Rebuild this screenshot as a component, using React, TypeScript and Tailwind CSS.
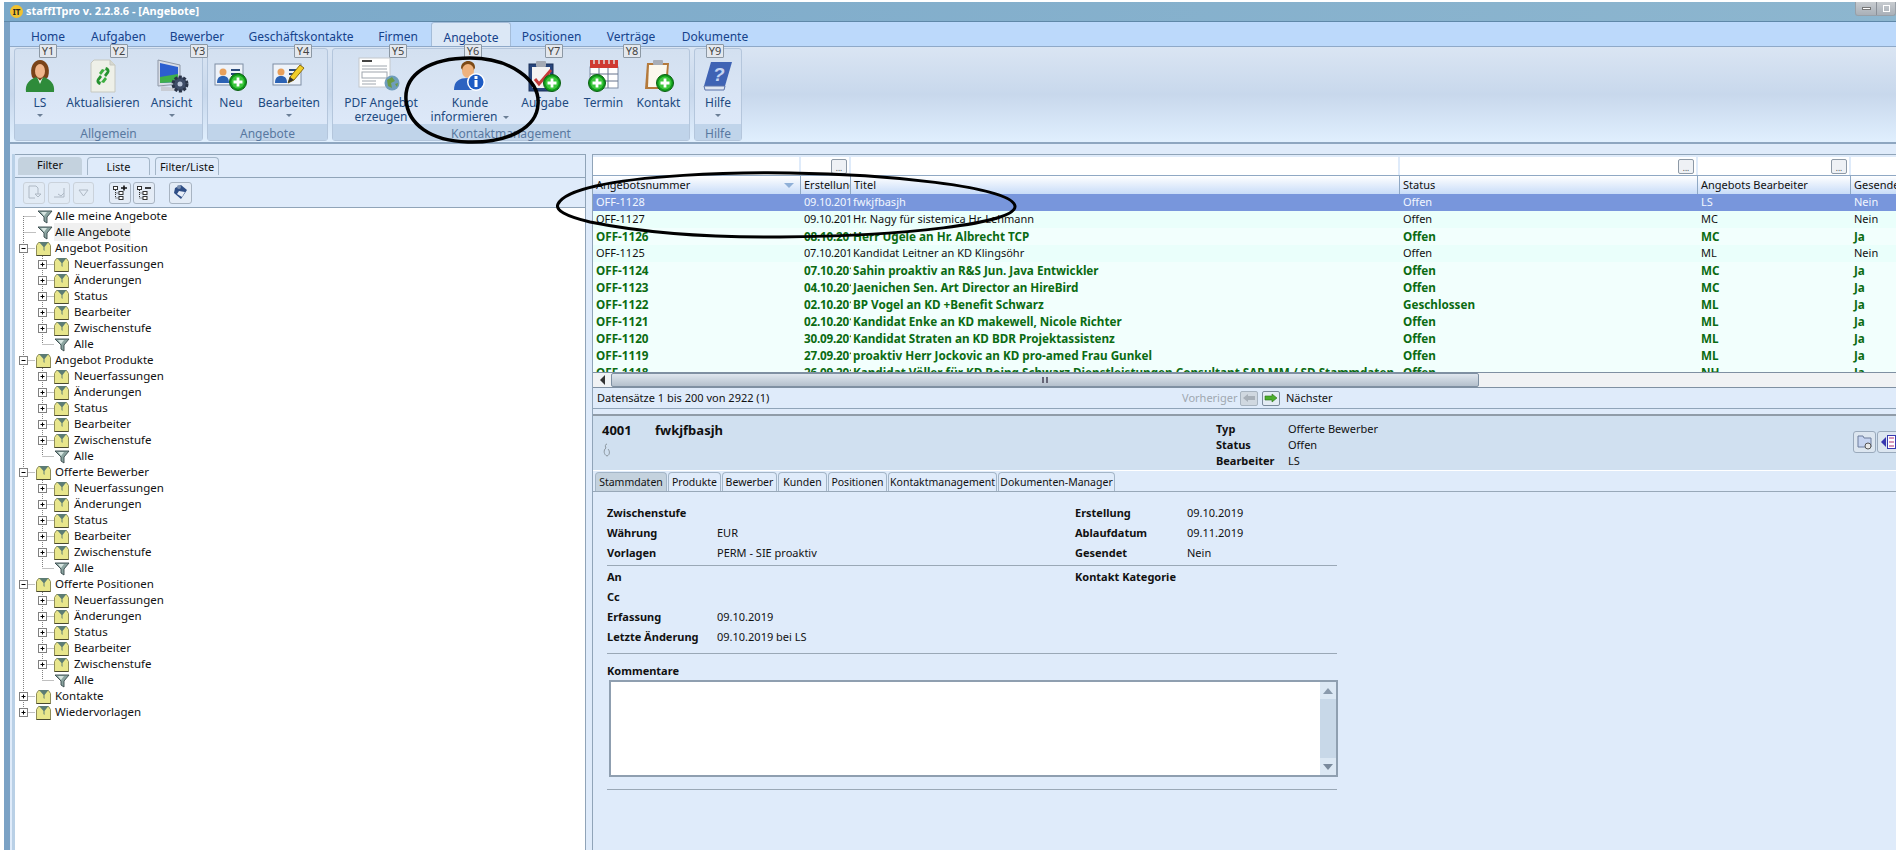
import React from 'react';

const colW = ['w-[208px]', 'w-[50px]', 'w-[549px]', 'w-[298px]', 'w-[153px]', 'w-[60px]'];

const rows = [
  ['OFF-1128', '09.10.2019', 'fwkjfbasjh', 'Offen', 'LS', 'Nein', 'sel'],
  ['OFF-1127', '09.10.2019', 'Hr. Nagy für sistemica Hr. Lehmann', 'Offen', 'MC', 'Nein', ''],
  ['OFF-1126', '08.10.2019', 'Herr Ugele an Hr. Albrecht TCP', 'Offen', 'MC', 'Ja', 'sent'],
  ['OFF-1125', '07.10.2019', 'Kandidat Leitner an KD Klingsöhr', 'Offen', 'ML', 'Nein', ''],
  ['OFF-1124', '07.10.2019', 'Sahin proaktiv an R&S Jun. Java Entwickler', 'Offen', 'MC', 'Ja', 'sent'],
  ['OFF-1123', '04.10.2019', 'Jaenichen Sen. Art Director an HireBird', 'Offen', 'MC', 'Ja', 'sent'],
  ['OFF-1122', '02.10.2019', 'BP Vogel an KD +Benefit Schwarz', 'Geschlossen', 'ML', 'Ja', 'sent'],
  ['OFF-1121', '02.10.2019', 'Kandidat Enke an KD makewell, Nicole Richter', 'Offen', 'ML', 'Ja', 'sent'],
  ['OFF-1120', '30.09.2019', 'Kandidat Straten an KD BDR Projektassistenz', 'Offen', 'ML', 'Ja', 'sent'],
  ['OFF-1119', '27.09.2019', 'proaktiv Herr Jockovic an KD pro-amed Frau Gunkel', 'Offen', 'ML', 'Ja', 'sent'],
  ['OFF-1118', '26.09.2019', 'Kandidat Völler für KD Boing Schwarz Dienstleistungen Consultant SAP MM / SD Stammdaten', 'Offen', 'NH', 'Ja', 'sent'],
];

const tabs = [
  ['Home', 'w-[64px]'],
  ['Aufgaben', 'w-[77px]'],
  ['Bewerber', 'w-[80px]'],
  ['Geschäftskontakte', 'w-[128px]'],
  ['Firmen', 'w-[66px]'],
  ['Angebote', 'w-[80px]'],
  ['Positionen', 'w-[81px]'],
  ['Verträge', 'w-[78px]'],
  ['Dokumente', 'w-[90px]'],
];

const keytips = [
  ['Y1', 'left-[39px]'],
  ['Y2', 'left-[110px]'],
  ['Y3', 'left-[190px]'],
  ['Y4', 'left-[294px]'],
  ['Y5', 'left-[389px]'],
  ['Y6', 'left-[464px]'],
  ['Y7', 'left-[545px]'],
  ['Y8', 'left-[623px]'],
  ['Y9', 'left-[706px]'],
];

const PlusBadge = ({ x, y }: { x: number; y: number }) => (
  <g>
    <circle cx={x} cy={y} r="8.5" fill="#0f9a1a" stroke="#0b5f12" strokeWidth="1" />
    <circle cx={x} cy={y} r="6.5" fill="#3cc63c" />
    <path d={`M${x - 4.5} ${y}h9M${x} ${y - 4.5}v9`} stroke="#fff" strokeWidth="2.8" />
  </g>
);

const IconLS = () => (
  <svg width="32" height="34" viewBox="0 0 32 34">
    <path d="M8 18C5 8 10 1 16 1s11 7 8 17l-3 3H11z" fill="#7a4318" />
    <ellipse cx="16" cy="12" rx="5" ry="7" fill="#f0b58a" />
    <path d="M2 33c-1-8 3-12 10-15l4 4 4-4c7 3 11 7 10 15z" fill="#2e8b3a" />
    <path d="M13 18l3 7 3-7-3 4z" fill="#e8f5e8" />
  </svg>
);

const IconRefresh = () => (
  <svg width="32" height="34" viewBox="0 0 32 34">
    <path d="M7 1h16l5 5v27H4V4z" fill="#eef0e8" stroke="#c6c8c0" />
    <path d="M23 1v5h5" fill="#d6d8d0" stroke="#c6c8c0" />
    <path d="M19 8a4 4 0 0 1 3 6l-3 4-2-2 3-4-2-1zM13 26a4 4 0 0 1-3-6l3-4 2 2-3 4 2 1z" fill="#25922f" />
    <path d="M12 14l3-4 3 1-4 5zM20 20l-3 4-3-1 4-5z" fill="#3cae3f" />
  </svg>
);

const IconView = () => (
  <svg width="34" height="34" viewBox="0 0 34 34">
    <path d="M3 1l22 5v19L3 27z" fill="#d8dde6" stroke="#8e97a6" />
    <path d="M5 4l18 4v15L5 24z" fill="#2c5fd0" />
    <path d="M5 18l18-3v8L5 24z" fill="#3fb04a" />
    <path d="M6 27l15 2v3H6z" fill="#c8ccd4" />
    <circle cx="25" cy="25" r="7" fill="#3f4d68" stroke="#2a3448" strokeWidth="3" strokeDasharray="3 1.5" />
    <circle cx="25" cy="25" r="2.5" fill="#b8c4d8" />
  </svg>
);

const IconCardNew = ({ pencil }: { pencil?: boolean }) => (
  <svg width="34" height="30" viewBox="0 0 34 30">
    <rect x="1" y="3" width="28" height="21" fill="#eef3fa" stroke="#7e8ea4" />
    <circle cx="9" cy="11" r="3.5" fill="#e8a05c" />
    <path d="M3 22c0-6 3-7 6-7s6 1 6 7z" fill="#2b62b4" />
    <path d="M17 9h9M17 13h9" stroke="#2c4c7c" strokeWidth="2" />
    {pencil ? (
      <g>
        <path d="M16 22l2-6L28 4l4 3-10 12z" fill="#f2cf2a" stroke="#8d6d10" />
        <path d="M16 22l2-6 4 3z" fill="#333" />
      </g>
    ) : (
      <PlusBadge x={24} y={21} />
    )}
  </svg>
);

const IconPdf = () => (
  <svg width="46" height="38" viewBox="0 0 46 38">
    <rect x="1" y="1" width="31" height="29" fill="#fff" stroke="#c4c8cc" />
    <path d="M4 4h10" stroke="#444" strokeWidth="2" />
    <path d="M4 9h25M4 12h25" stroke="#9fa6ae" />
    <rect x="4" y="15" width="25" height="6" fill="none" stroke="#9fa6ae" />
    <path d="M4 24h14M4 27h14" stroke="#9fa6ae" />
    <circle cx="34" cy="26" r="7.5" fill="#6e9dbb" />
    <path d="M29 23l5-3 3 4-4 2 1 5-4-2zM37 27l3-1-1 4z" fill="#6b9b44" />
  </svg>
);

const IconInform = () => (
  <svg width="34" height="32" viewBox="0 0 34 32">
    <path d="M8 8c0-5 4-7 7-7 4 0 7 2 7 7l-2 3H10z" fill="#7c4a17" />
    <ellipse cx="15" cy="11" rx="6" ry="7" fill="#eeb27e" />
    <path d="M1 30c0-9 5-12 14-12s12 3 12 12z" fill="#2c62c0" />
    <circle cx="23" cy="22" r="9" fill="#fff" />
    <circle cx="23" cy="22" r="7.5" fill="#1d5bc4" />
    <rect x="21.5" y="20" width="3" height="7" fill="#fff" />
    <rect x="21.5" y="16" width="3" height="3" fill="#fff" />
  </svg>
);

const IconTask = () => (
  <svg width="34" height="34" viewBox="0 0 34 34">
    <rect x="1" y="5" width="24" height="27" fill="#27457c" stroke="#1b3159" />
    <rect x="4" y="8" width="18" height="21" fill="#f3f3f3" />
    <rect x="8" y="2" width="10" height="6" rx="1" fill="#a4aab4" />
    <path d="M7 20l4 5 12-14" fill="none" stroke="#c63a3a" strokeWidth="3" />
    <PlusBadge x={24} y={24} />
  </svg>
);

const IconCalendar = () => (
  <svg width="34" height="34" viewBox="0 0 34 34">
    <rect x="3" y="8" width="28" height="21" fill="#fff" stroke="#7f8ea6" />
    <path d="M3 1h28v8H3z" fill="#cf3a32" />
    <path d="M7 1v4M12 1v4M17 1v4M22 1v4M27 1v4" stroke="#ddd" strokeWidth="1.5" />
    <path d="M3 15h28M3 22h28M12 9v20M21 9v20" stroke="#65728c" />
    <PlusBadge x={10} y={24} />
  </svg>
);

const IconContact = () => (
  <svg width="34" height="34" viewBox="0 0 34 34">
    <path d="M5 4h22l-2 26H3z" fill="#b47a3c" />
    <path d="M7 6h18l-2 22H6z" fill="#fbf8ee" />
    <rect x="11" y="1" width="10" height="5" rx="1" fill="#a8aeb8" />
    <PlusBadge x={23} y={24} />
  </svg>
);

const IconHelp = () => (
  <svg width="32" height="32" viewBox="0 0 32 32">
    <path d="M9 2h21l-7 24H2z" fill="#3f63b4" />
    <path d="M2 26h21l-1 4H3z" fill="#dfe6f2" stroke="#5a72a8" />
    <text x="11" y="21" fontSize="19" fontWeight="700" fill="#c4d4f2" fontFamily="Liberation Sans, sans-serif" fontStyle="italic">?</text>
  </svg>
);

const RibbonButton = ({ w, icon, lines, arrow }: { w: string; icon: React.ReactNode; lines: string[]; arrow?: boolean }) => (
  <div className={`${w} flex flex-col items-center pt-[9px]`}>
    <div className="h-[36px] flex items-center justify-center">{icon}</div>
    <div className="mt-[2px] leading-[14px] text-center text-[#214a80] whitespace-nowrap">
      {lines.map((l, i) => (
        <div key={l}>
          {l}
          {arrow && i === 1 && <span className="inline-block ml-[6px] align-middle w-0 h-0 border-x-[3px] border-t-[3px] border-x-transparent border-t-[#6b7f96]" />}
        </div>
      ))}
      {arrow && lines.length === 1 && <div className="mx-auto mt-[4px] w-0 h-0 border-x-[3px] border-t-[3px] border-x-transparent border-t-[#6b7f96]" />}
    </div>
  </div>
);

const RibbonGroup = ({ w, label, children }: { w: string; label: string; children: React.ReactNode }) => (
  <div className={`${w} h-[93px] mt-[1px] flex flex-col rounded-[3px] border border-[#b4c6dc] bg-gradient-to-b from-[#d3e0f0] to-[#dfeafa]`}>
    <div className="h-[75px] shrink-0 flex">{children}</div>
    <div className="h-[16px] shrink-0 bg-[#c0d4ea] text-center text-[#5878a0] leading-[19px]">{label}</div>
  </div>
);

type TreeKind = 'leaf' | 'folder';

const FolderGlyph = ({ x }: { x: number }) => (
  <g transform={`translate(${x} 0)`}>
    <path d="M0.5 5.5l2-3h10l2 3v10h-14z" fill="#e8e68c" stroke="#8f8d58" />
    <path d="M0.5 15.5h14" stroke="#4a4a30" />
    <path d="M3 2l4.5 5v3l1 1V7l4-5z" fill="#5c7c74" />
  </g>
);

const FunnelGlyph = ({ x }: { x: number }) => (
  <g transform={`translate(${x} 0)`}>
    <path d="M0 3h14l-5 6v6l-3-2V9z" fill="#8ba4a0" stroke="#36474a" strokeWidth="0.9" />
    <path d="M3 4h6l-3 4z" fill="#d8e6e2" />
  </g>
);

// prefix of one tree row: dotted guides, expander box and icon
const TreeRoot = ({ kind, box, label, last, first, selected }: { kind: TreeKind; box?: '+' | '-'; label: string; last?: boolean; first?: boolean; selected?: boolean }) => (
  <div className="h-4 flex items-center">
    <svg width="37" height="16" className="shrink-0 ml-[2px]">
      <path d={`M6.5 ${first ? 8 : 0}V${last ? 8 : 16}M6.5 8.5H${kind === 'leaf' ? 19 : 18}`} stroke="#808080" strokeDasharray="1 1" />
      {box && (
        <g>
          <rect x="2.5" y="4.5" width="8" height="8" fill="#fff" stroke="#808080" />
          <path d={box === '+' ? 'M4.5 8.5h4M6.5 6.5v4' : 'M4.5 8.5h4'} stroke="#000" />
        </g>
      )}
      {kind === 'leaf' ? <FunnelGlyph x={21} /> : <FolderGlyph x={19} />}
    </svg>
    <span className={`px-[1px] ${selected ? 'bg-[#f0f0f0]' : ''}`}>{label}</span>
  </div>
);

const TreeChild = ({ kind, label, last }: { kind: TreeKind; label: string; last?: boolean }) => (
  <div className="h-4 flex items-center">
    <svg width="57" height="16" className="shrink-0 ml-[2px]">
      <path d="M6.5 0V16" stroke="#808080" strokeDasharray="1 1" />
      <path d={`M25.5 0V${last ? 8 : 16}M25.5 8.5H37`} stroke="#808080" strokeDasharray="1 1" />
      {kind === 'folder' && (
        <g>
          <rect x="21.5" y="4.5" width="8" height="8" fill="#fff" stroke="#808080" />
          <path d="M23.5 8.5h4M25.5 6.5v4" stroke="#000" />
        </g>
      )}
      {kind === 'leaf' ? <FunnelGlyph x={38} /> : <FolderGlyph x={37} />}
    </svg>
    <span>{label}</span>
  </div>
);

const TreeGroup = ({ label }: { label: string }) => (
  <>
    <TreeRoot kind="folder" box="-" label={label} />
    {['Neuerfassungen', 'Änderungen', 'Status', 'Bearbeiter', 'Zwischenstufe'].map((c) => (
      <TreeChild key={c} kind="folder" label={c} />
    ))}
    <TreeChild kind="leaf" label="Alle" last />
  </>
);

const ToolButton = ({ w, children, off }: { w: string; children: React.ReactNode; off?: boolean }) => (
  <div className={`${w} h-[22px] flex items-center justify-center rounded-[3px] border ${off ? 'border-[#c2c8ce] bg-[#e4ebf3] opacity-70' : 'border-[#a8b4c2] bg-[#e4ecf6]'}`}>
    {children}
  </div>
);

const TreeToggleIcon = ({ plus }: { plus?: boolean }) => (
  <svg width="16" height="16" viewBox="0 0 16 16">
    <path d="M3.5 3v10h3M3.5 8h3" fill="none" stroke="#333" strokeDasharray="1 1" />
    <rect x="1.5" y="1.5" width="4" height="3" fill="#fff" stroke="#333" />
    <rect x="7" y="6.5" width="4" height="3" fill="#fff" stroke="#333" />
    <rect x="7" y="11.5" width="4" height="3" fill="#fff" stroke="#333" />
    <path d={plus ? 'M9 3h6M12 0.5v5' : 'M9 3h6'} stroke="#111" strokeWidth="1.6" />
  </svg>
);

const DotsButton = () => (
  <span className="absolute right-[2px] top-[2px] h-[15px] w-[16px] flex items-end justify-center rounded-[2px] border border-[#8d99a6] bg-[#eef1f5] text-[8px] leading-[10px] text-[#444]">...</span>
);

const Field = ({ label, value, valueW = 'w-[110px]' }: { label: string; value?: string; valueW?: string }) => (
  <div className="h-5 flex items-center">
    <span className={`${valueW} shrink-0 font-bold`}>{label}</span>
    <span>{value}</span>
  </div>
);

const TableRow = ({ r }: { r: string[] }) => {
  const tone =
    r[6] === 'sel'
      ? 'bg-[#7896dc] text-[#f2f6ff]'
      : r[6] === 'sent'
        ? 'bg-[#f2fffd] text-[#0b6b12] font-bold text-[11.7px]'
        : 'bg-[#eafffb] text-[#111]';
  return (
    <div className={`h-[17px] flex items-center ${tone}`}>
      {r.slice(0, 6).map((c, i) => (
        <div key={i} className={`${colW[i]} shrink-0 overflow-hidden whitespace-nowrap ${i === 2 ? 'pl-[2px]' : 'pl-[3px]'} ${i === 1 ? 'tracking-[-0.2px]' : ''}`}>
          {c}
        </div>
      ))}
    </div>
  );
};

export default function App() {
  return (
    <div className="relative w-[1896px] h-[850px] overflow-hidden bg-white text-[11px] text-[#111] font-['Noto_Sans',sans-serif] flex flex-col">
      <div className="h-[2px] shrink-0 bg-white" />
      <div className="h-[20px] shrink-0 ml-1 flex items-center bg-gradient-to-r from-[#7aa8c9] to-[#8db6cf] border-b border-[#5f88a8]">
        <span className="ml-[6px] w-[13px] h-[13px] rounded-full bg-[#f2c230] text-[8px] leading-[13px] font-bold text-center text-[#222]">IT</span>
        <span className="ml-[3px] text-[11px] font-bold text-white">staffITpro v. 2.2.8.6 - [Angebote]</span>
        <div className="ml-auto mb-[6px] h-[14px] flex rounded-b-[3px] border border-t-0 border-[#98a0a8] bg-gradient-to-b from-[#c8ccd0] to-[#a9b0b8]">
          <div className="w-[21px] flex items-center justify-center border-r border-[#8a9098]">
            <span className="w-[9px] h-[3px] bg-white border border-[#777]" />
          </div>
          <div className="w-[18px] flex items-center justify-center">
            <span className="w-[7px] h-[7px] border border-white" />
          </div>
        </div>
      </div>

      <div className="flex-1 min-h-0 flex">
        <div className="w-1 shrink-0 bg-white" />
        <div className="w-[6px] shrink-0 bg-[#7ba2c5]" />
        <div className="flex-1 min-w-0 flex flex-col">
          {/* tab strip */}
          <div className="h-[25px] shrink-0 pl-[6px] flex items-end bg-[#bcd9fb] border-b border-[#8fa9c8] text-[12px] text-[#15428b]">
            {tabs.map(([t, w]) => (
              <div
                key={t}
                className={`${w} h-[24px] shrink-0 text-center leading-[29px] ${t === 'Angebote' ? 'rounded-t-[3px] border border-b-0 border-[#a4bcd8] bg-[#dce8f6]' : ''}`}
              >
                {t}
              </div>
            ))}
          </div>

          {/* ribbon */}
          <div className="h-[97px] shrink-0 pl-[4px] flex gap-1 border-b-2 border-[#8ea6c0] bg-gradient-to-b from-[#dae5f3] via-[#c8d8ec] to-[#e0effe] text-[12px]">
            <RibbonGroup w="w-[189px]" label="Allgemein">
              <RibbonButton w="w-[50px]" icon={<IconLS />} lines={['LS']} arrow />
              <RibbonButton w="w-[76px]" icon={<IconRefresh />} lines={['Aktualisieren']} />
              <RibbonButton w="w-[61px]" icon={<IconView />} lines={['Ansicht']} arrow />
            </RibbonGroup>
            <RibbonGroup w="w-[121px]" label="Angebote">
              <RibbonButton w="w-[46px]" icon={<IconCardNew />} lines={['Neu']} />
              <RibbonButton w="w-[70px]" icon={<IconCardNew pencil />} lines={['Bearbeiten']} arrow />
            </RibbonGroup>
            <RibbonGroup w="w-[358px]" label="Kontaktmanagement">
              <RibbonButton w="w-[96px]" icon={<IconPdf />} lines={['PDF Angebot', 'erzeugen']} />
              <RibbonButton w="w-[82px]" icon={<IconInform />} lines={['Kunde', 'informieren']} arrow />
              <RibbonButton w="w-[68px]" icon={<IconTask />} lines={['Aufgabe']} />
              <RibbonButton w="w-[49px]" icon={<IconCalendar />} lines={['Termin']} />
              <RibbonButton w="w-[61px]" icon={<IconContact />} lines={['Kontakt']} />
            </RibbonGroup>
            <RibbonGroup w="w-[48px]" label="Hilfe">
              <RibbonButton w="w-[46px]" icon={<IconHelp />} lines={['Hilfe']} arrow />
            </RibbonGroup>
          </div>

          {/* main area */}
          <div className="flex-1 min-h-0 pt-[10px] pl-[2px] flex bg-[#dfebfa]">
            <div className="w-[3px] shrink-0 bg-[#b9d0e6]" />
            {/* left panel */}
            <div className="w-[571px] shrink-0 flex flex-col border-t border-r border-[#90a4b8]">
              <div className="h-[23px] shrink-0 pl-[3px] flex items-end gap-[5px] border-b border-[#90a4b8] text-[11px]">
                <div className="w-[64px] h-[18px] mb-[2px] rounded-t-[4px] bg-[#c4d2de] text-center leading-[16px]">Filter</div>
                <div className="w-[63px] h-[18px] mb-[2px] rounded-t-[4px] border border-b-0 border-[#a4b6c8] text-center leading-[18px]">Liste</div>
                <div className="w-[64px] h-[18px] mb-[2px] rounded-t-[4px] border border-b-0 border-[#a4b6c8] text-center leading-[18px]">Filter/Liste</div>
              </div>
              <div className="h-[30px] shrink-0 pl-[8px] flex items-center border-b border-[#90a4b8]">
                <ToolButton w="w-[22px]" off>
                  <svg width="15" height="15" viewBox="0 0 15 15"><path d="M2 1h7l2 2v6M2 1v12h6M8 9l3 3 3-3z" fill="none" stroke="#9aa4ae" /></svg>
                </ToolButton>
                <div className="w-[3px]" />
                <ToolButton w="w-[22px]" off>
                  <svg width="15" height="15" viewBox="0 0 15 15"><path d="M2 12h10V3M6 9l3 2 3-3" fill="none" stroke="#9aa4ae" /></svg>
                </ToolButton>
                <div className="w-[3px]" />
                <ToolButton w="w-[21px]" off>
                  <svg width="13" height="13" viewBox="0 0 13 13"><path d="M2 4h9L6.5 10z" fill="none" stroke="#9aa4ae" /></svg>
                </ToolButton>
                <div className="w-[15px]" />
                <ToolButton w="w-[22px]"><TreeToggleIcon plus /></ToolButton>
                <div className="w-[2px]" />
                <ToolButton w="w-[22px]"><TreeToggleIcon /></ToolButton>
                <div className="w-[14px]" />
                <ToolButton w="w-[23px]">
                  <svg width="17" height="17" viewBox="0 0 17 17">
                    <path d="M3 4l6-3 6 5-6 9-7-6z" fill="#2f4e86" />
                    <path d="M7 7l6 1-3 5-5-3z" fill="#e8eef8" />
                    <circle cx="7" cy="3" r="2" fill="#7a8fb0" />
                  </svg>
                </ToolButton>
              </div>
              <div className="flex-1 min-h-0 bg-white text-[11.5px]">
                <TreeRoot kind="leaf" label="Alle meine Angebote" first />
                <TreeRoot kind="leaf" label="Alle Angebote" selected />
                <TreeGroup label="Angebot Position" />
                <TreeGroup label="Angebot Produkte" />
                <TreeGroup label="Offerte Bewerber" />
                <TreeGroup label="Offerte Positionen" />
                <TreeRoot kind="folder" box="+" label="Kontakte" />
                <TreeRoot kind="folder" box="+" label="Wiedervorlagen" last />
              </div>
            </div>

            {/* right panel */}
            <div className="ml-[6px] flex-1 min-w-0 flex flex-col overflow-hidden border-l border-t border-[#90a4b8] bg-[#dfebfa]">
              <div className="h-[20px] shrink-0 pt-[2px] flex">
                {colW.map((w, i) => (
                  <div key={w} className={`${w} shrink-0 pr-[2px]`}>
                    <div className="relative h-[18px] bg-white">{(i === 1 || i === 3 || i === 4) && <DotsButton />}</div>
                  </div>
                ))}
              </div>
              <div className="h-[19px] shrink-0 flex border-t border-[#8fa8c4] bg-gradient-to-b from-[#ffffff] to-[#c8dcf8]">
                {['Angebotsnummer', 'Erstellung', 'Titel', 'Status', 'Angebots Bearbeiter', 'Gesendet'].map((h, i) => (
                  <div key={h} className={`${colW[i]} shrink-0 overflow-hidden whitespace-nowrap pl-[3px] leading-[18px] border-r border-[#8fa8c4] relative`}>
                    {h}
                    {i === 0 && <span className="absolute right-[6px] top-[7px] w-0 h-0 border-x-[5px] border-t-[5px] border-x-transparent border-t-[#8fb0d8]" />}
                  </div>
                ))}
              </div>
              <div className="h-[178px] shrink-0 overflow-hidden bg-[#f0fffd]">
                {rows.map((r) => (
                  <TableRow key={r[0]} r={r} />
                ))}
              </div>
              <div className="h-[16px] shrink-0 flex items-center border-y border-[#7f90a2] bg-[#f0f2f4]">
                <div className="w-[18px] flex justify-center">
                  <span className="w-0 h-0 border-y-[5px] border-r-[5px] border-y-transparent border-r-[#333]" />
                </div>
                <div className="w-[868px] h-[14px] flex items-center justify-center rounded-[2px] border border-[#7f90a2] bg-gradient-to-b from-[#dfe6ee] to-[#b4c0cc]">
                  <span className="w-[6px] h-[6px] border-x-2 border-[#667]" />
                </div>
              </div>
              <div className="h-[21px] shrink-0 pl-[4px] flex items-center border-b border-[#90a4b8] bg-[#dfebfa]">
                <span className="w-[585px] shrink-0">Datensätze 1 bis 200 von 2922 (1)</span>
                <span className="w-[58px] shrink-0 text-[#a0a8b0]">Vorheriger</span>
                <span className="w-[18px] h-[15px] flex items-center justify-center rounded-[2px] border border-[#a8b4c0] bg-[#d0d8e0]">
                  <svg width="14" height="10" viewBox="0 0 14 10"><path d="M1 5l5-4v2h7v4H6v2z" fill="#a8b0b8" /></svg>
                </span>
                <span className="ml-[4px] w-[18px] h-[15px] flex items-center justify-center rounded-[2px] border border-[#7c8c9c] bg-[#e4ecf4]">
                  <svg width="14" height="10" viewBox="0 0 14 10"><path d="M13 5L8 1v2H1v4h7v2z" fill="#4cae2c" stroke="#2a6e14" strokeWidth="0.6" /></svg>
                </span>
                <span className="ml-[6px]">Nächster</span>
              </div>

              <div className="h-[5px] shrink-0 bg-[#dfebfa]" />
              {/* detail header */}
              <div className="h-[57px] shrink-0 pl-[9px] flex bg-[#d0e0f0] border-t-2 border-[#909ca8] border-b border-b-white relative">
                <div className="pt-[5px] font-bold text-[13px] leading-[18px]">
                  <div className="flex">
                    <span className="w-[53px]">4001</span>
                    <span>fwkjfbasjh</span>
                  </div>
                  <svg width="10" height="16" viewBox="0 0 10 16" className="mt-[3px]">
                    <path d="M5 2C3 2 3 5 4 6c-3 2-2 7 1 8 3-1 3-5 1-7" fill="none" stroke="#8a959e" />
                  </svg>
                </div>
                <div className="ml-[493px] pt-[5px] leading-[16px]">
                  <div className="flex"><span className="w-[72px] font-bold">Typ</span>Offerte Bewerber</div>
                  <div className="flex"><span className="w-[72px] font-bold">Status</span>Offen</div>
                  <div className="flex"><span className="w-[72px] font-bold">Bearbeiter</span>LS</div>
                </div>
                <div className="absolute left-[1260px] top-[15px] flex gap-[1px]">
                  <div className="w-[23px] h-[22px] flex items-center justify-center rounded-[3px] border border-[#9aaabc] bg-[#dce6f0]">
                    <svg width="16" height="16" viewBox="0 0 16 16">
                      <path d="M1 2h5l1 2h7v9H1z" fill="#c6d4f0" stroke="#6c7c9c" />
                      <circle cx="11" cy="12" r="3" fill="#e8e8e8" stroke="#555" />
                    </svg>
                  </div>
                  <div className="w-[23px] h-[22px] flex items-center justify-center rounded-[3px] border border-[#9aaabc] bg-[#dce6f0]">
                    <svg width="18" height="16" viewBox="0 0 18 16">
                      <path d="M6 3v10L1 8z" fill="#3838b0" />
                      <rect x="7.5" y="1.5" width="8" height="13" fill="#fff" stroke="#3838b0" />
                      <path d="M9 4h5M9 8h5M9 12h5" stroke="#b03070" />
                    </svg>
                  </div>
                </div>
              </div>

              {/* detail tabs */}
              <div className="h-[21px] shrink-0 pl-[2px] flex items-end gap-[1px] border-b border-[#98a8b8] text-[10.5px]">
                {[
                  ['Stammdaten', 'w-[72px] bg-[#c4d2de]'],
                  ['Produkte', 'w-[53px]'],
                  ['Bewerber', 'w-[55px]'],
                  ['Kunden', 'w-[49px]'],
                  ['Positionen', 'w-[59px]'],
                  ['Kontaktmanagement', 'w-[109px]'],
                  ['Dokumenten-Manager', 'w-[117px]'],
                ].map(([t, c]) => (
                  <div key={t} className={`${c} h-[19px] shrink-0 rounded-t-[4px] border border-b-0 border-[#a4b6c8] text-center leading-[18px] whitespace-nowrap overflow-hidden`}>
                    {t}
                  </div>
                ))}
              </div>

              {/* detail body */}
              <div className="flex-1 min-h-0 bg-[#dfebfa] pt-[11px] pl-[14px]">
                <div className="w-[730px] flex">
                  <div className="w-[468px] shrink-0">
                    <Field label="Zwischenstufe" />
                    <Field label="Währung" value="EUR" />
                    <Field label="Vorlagen" value="PERM - SIE proaktiv" />
                  </div>
                  <div>
                    <Field label="Erstellung" value="09.10.2019" valueW="w-[112px]" />
                    <Field label="Ablaufdatum" value="09.11.2019" valueW="w-[112px]" />
                    <Field label="Gesendet" value="Nein" valueW="w-[112px]" />
                  </div>
                </div>
                <div className="w-[730px] mt-[2px] h-px bg-[#9aa8b6]" />
                <div className="w-[730px] mt-[1px] flex">
                  <div className="w-[468px] shrink-0">
                    <Field label="An" />
                    <Field label="Cc" />
                    <Field label="Erfassung" value="09.10.2019" />
                    <Field label="Letzte Änderung" value="09.10.2019 bei LS" />
                  </div>
                  <Field label="Kontakt Kategorie" valueW="w-[120px]" />
                </div>
                <div className="w-[730px] mt-[6px] h-px bg-[#9aa8b6]" />
                <div className="mt-[9px] h-[17px] font-bold leading-[15px]">Kommentare</div>
                <div className="ml-[2px] w-[729px] h-[97px] flex justify-end border-2 border-[#8f9fb0] bg-white">
                  <div className="w-[16px] flex flex-col bg-[#c8d8e8]">
                    <div className="h-[17px] flex items-center justify-center bg-[#dce8f4]">
                      <span className="w-0 h-0 border-x-[5px] border-b-[6px] border-x-transparent border-b-[#8a9aac]" />
                    </div>
                    <div className="flex-1" />
                    <div className="h-[17px] flex items-center justify-center bg-[#dce8f4]">
                      <span className="w-0 h-0 border-x-[5px] border-t-[6px] border-x-transparent border-t-[#7a8a9c]" />
                    </div>
                  </div>
                </div>
                <div className="w-[730px] mt-[12px] h-px bg-[#9aa8b6]" />
              </div>
            </div>
          </div>
        </div>
      </div>

      {/* key tips */}
      {keytips.map(([k, l]) => (
        <div
          key={k}
          className={`absolute ${l} top-[44px] w-[18px] h-[14px] border border-[#8c98a4] rounded-[1px] bg-[#e4e8ee] text-center text-[11px] leading-[12px] text-[#444]`}
        >
          {k}
        </div>
      ))}

      {/* hand drawn marks */}
      <svg width="1896" height="850" className="absolute left-0 top-0 pointer-events-none">
        <path
          d="M406 100C404 74 430 58 470 58C510 58 540 80 538 104C537 128 508 143 468 142C430 141 408 124 406 100Z"
          fill="none"
          stroke="#000"
          strokeWidth="3.5"
        />
        <path
          d="M596 186C640 176 720 172 790 173C880 174 1012 186 1015 206C1017 224 900 236 780 237C680 238 620 228 590 222C565 216 555 210 558 204C562 196 578 190 596 186Z"
          fill="none"
          stroke="#000"
          strokeWidth="3"
        />
      </svg>
    </div>
  );
}
